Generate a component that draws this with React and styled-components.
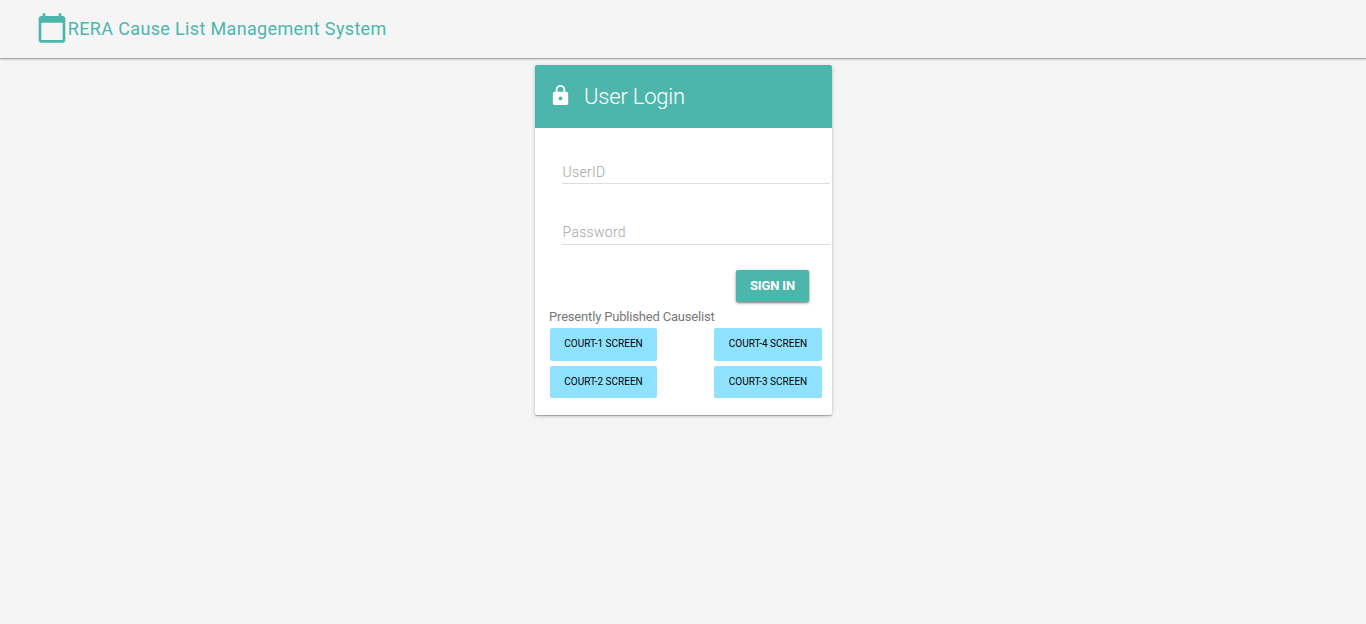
import React from 'react';
import styled, { createGlobalStyle } from 'styled-components';
import { MdCalendarToday, MdLock } from 'react-icons/md';

const TEAL = '#4db6ac';

const GlobalStyle = createGlobalStyle`
  * { box-sizing: border-box; }
  body {
    margin: 0;
    background: #f5f5f5;
    font-family: Roboto, "Liberation Sans", sans-serif;
  }
`;

const Page = styled.div`
  min-height: 100vh;
`;

const TopBar = styled.header`
  height: 58px;
  padding: 0 0 0 36px;
  display: flex;
  align-items: center;
  background: #f5f5f5;
  color: ${TEAL};
  box-shadow: 0 1px 1px rgba(0, 0, 0, 0.22), 0 1px 3px rgba(0, 0, 0, 0.2);
`;

const CalendarIcon = styled(MdCalendarToday)`
  margin: -2px -0.2px 0 0;
`;

const Brand = styled.h1`
  margin: 0;
  font-size: 18px;
  font-weight: 400;
  letter-spacing: 0.35px;
  line-height: 58px;
  white-space: nowrap;
`;

const Card = styled.main`
  width: 297px;
  height: 350px;
  margin: 7px 0 0 535px;
  background: #fff;
  border-radius: 2px;
  box-shadow: 0 1px 1px rgba(0, 0, 0, 0.25), 0 1px 4px rgba(0, 0, 0, 0.2);
`;

const CardHeader = styled.div`
  height: 63px;
  padding-left: 13.5px;
  display: flex;
  align-items: center;
  gap: 12.5px;
  background: ${TEAL};
  color: #fff;
  border-radius: 2px 2px 0 0;
`;

const LockIcon = styled(MdLock)`
  margin-top: -2px;
`;

const CardTitle = styled.h2`
  margin: 0;
  font-size: 22px;
  font-weight: 300;
  letter-spacing: -0.2px;
`;

const Form = styled.form`
  padding: 33px 2px 0 27px;
  display: flex;
  flex-direction: column;
`;

const Field = styled.input`
  height: ${({ $height }) => $height}px;
  margin: 0 0 ${({ $gap }) => $gap}px;
  padding: 0 0 0 0.6px;
  border: 0;
  border-bottom: 1px solid #ddd;
  outline: 0;
  background: transparent;
  font: 300 14px Roboto, sans-serif;
  letter-spacing: 0.28px;
  &::placeholder { color: #a4a4a4; opacity: 1; }
`;

const SignIn = styled.button`
  align-self: flex-end;
  width: 73px;
  height: 32px;
  margin-right: 21px;
  padding: 0 0 2px;
  border: 0;
  border-radius: 2px;
  background: ${TEAL};
  color: #fff;
  font: 700 13px Roboto, sans-serif;
  letter-spacing: -0.15px;
  box-shadow: 0 1px 2px rgba(0, 0, 0, 0.4), 0 1px 4px rgba(0, 0, 0, 0.18);
`;

const Published = styled.section`
  padding: 7px 10px 0 14px;
`;

const Caption = styled.p`
  margin: 0;
  font-size: 13px;
  line-height: 15px;
  letter-spacing: -0.18px;
  color: #777;
`;

const Courts = styled.div`
  margin: 4px 0 0 1px;
  display: grid;
  grid-template-columns: 107px 108px;
  grid-template-rows: 33px 32px;
  justify-content: space-between;
  row-gap: 5px;
`;

const CourtButton = styled.button`
  padding: 0 0 ${({ $lift }) => $lift}px;
  border: 0;
  border-radius: 2px;
  background: #8fe2fd;
  color: #000;
  font: 450 10px Roboto, sans-serif;
`;

export default function App() {
  return (
    <Page>
      <GlobalStyle />
      <TopBar>
        <CalendarIcon size={32} />
        <Brand>RERA Cause List Management System</Brand>
      </TopBar>
      <Card>
        <CardHeader>
          <LockIcon size={23} />
          <CardTitle>User Login</CardTitle>
        </CardHeader>
        <Form>
          <Field type="text" placeholder="UserID" $height={23} $gap={36} />
          <Field type="password" placeholder="Password" $height={25} $gap={25} />
          <SignIn type="button">SIGN IN</SignIn>
        </Form>
        <Published>
          <Caption>Presently Published Causelist</Caption>
          <Courts>
            <CourtButton $lift={3}>COURT-1 SCREEN</CourtButton>
            <CourtButton $lift={3}>COURT-4 SCREEN</CourtButton>
            <CourtButton $lift={1}>COURT-2 SCREEN</CourtButton>
            <CourtButton $lift={1}>COURT-3 SCREEN</CourtButton>
          </Courts>
        </Published>
      </Card>
    </Page>
  );
}
